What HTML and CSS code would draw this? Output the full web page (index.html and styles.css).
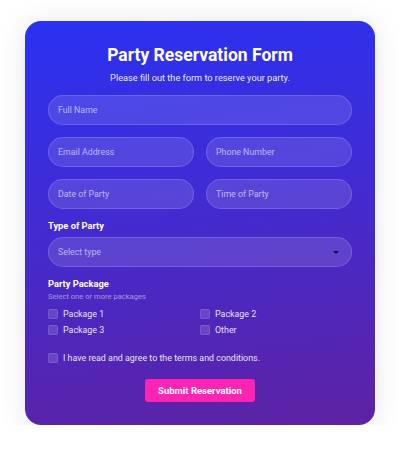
FILE: index.html
```html
<!DOCTYPE html>
<html lang="en">
<head>
<meta charset="utf-8">
<title>Party Reservation Form</title>
<link rel="stylesheet" href="styles.css">
</head>
<body>
<form class="card">
  <h1 class="title">Party Reservation Form</h1>
  <p class="subtitle">Please fill out the form to reserve your party.</p>
  <div class="fields">
    <input class="field" type="text" placeholder="Full Name">
    <div class="row">
      <input class="field" type="text" placeholder="Email Address">
      <input class="field" type="text" placeholder="Phone Number">
    </div>
    <div class="row">
      <input class="field" type="text" placeholder="Date of Party">
      <input class="field" type="text" placeholder="Time of Party">
    </div>
  </div>
  <div class="label">Type of Party</div>
  <div class="select">
    <span class="select-text">Select type</span>
    <span class="caret"></span>
  </div>
  <div class="label label-pkg">Party Package</div>
  <div class="hint">Select one or more packages</div>
  <div class="packages">
    <label class="check"><span class="box"></span>Package 1</label>
    <label class="check"><span class="box"></span>Package 2</label>
    <label class="check"><span class="box"></span>Package 3</label>
    <label class="check"><span class="box"></span>Other</label>
  </div>
  <label class="check terms"><span class="box"></span>I have read and agree to the terms and conditions.</label>
  <div class="actions">
    <button class="submit" type="button">Submit Reservation</button>
  </div>
</form>
</body>
</html>
```
FILE: styles.css
```css
* { box-sizing: border-box; }
html, body { margin: 0; padding: 0; background: #ffffff; }
body {
  font-family: Roboto, "Lato", sans-serif;
  color: #fff;
  padding-top: 21px;
}
.card {
  width: 350px;
  margin: 0 auto;
  height: 404px;
  padding: 23px 23px 23px;
  border-radius: 16px;
  background: linear-gradient(172deg, #2a31f2 0%, #3f2cd6 40%, #5e22a2 100%);
  box-shadow: 0 2px 30px rgba(0,0,0,0.11);
  display: flex;
  flex-direction: column;
}
.title {
  margin: 0;
  font-size: 17.5px;
  line-height: 22px;
  font-weight: 700;
  text-align: center;
}
.subtitle {
  margin: 5px 0 0;
  font-size: 9.2px;
  line-height: 14px;
  text-align: center;
  color: rgba(255,255,255,0.92);
}
.fields {
  margin-top: 10px;
  display: flex;
  flex-direction: column;
  gap: 12px;
}
.row {
  display: grid;
  grid-template-columns: 1fr 1fr;
  gap: 12px;
}
.field, .select {
  height: 30px;
  width: 100%;
  border-radius: 15px;
  border: 1px solid rgba(255,255,255,0.16);
  background: rgba(255,255,255,0.12);
  padding: 0 9px;
  font-family: inherit;
  font-size: 8.8px;
  color: #fff;
  outline: none;
}
.field::placeholder { color: rgba(255,255,255,0.62); }
.label {
  margin-top: 11px;
  font-size: 9.3px;
  line-height: 12px;
  font-weight: 700;
}
.select {
  margin-top: 5px;
  display: flex;
  align-items: center;
  justify-content: space-between;
  padding: 0 10px 0 9px;
}
.select-text { color: rgba(255,255,255,0.6); }
.caret {
  width: 0; height: 0;
  border-left: 3px solid transparent;
  border-right: 3px solid transparent;
  border-top: 3px solid #14123a;
  margin-right: 2px;
}
.hint {
  margin-top: 2px;
  font-size: 7.6px;
  line-height: 10px;
  color: rgba(255,255,255,0.5);
}
.packages {
  margin-top: 5px;
  display: grid;
  grid-template-columns: 1fr 1fr;
  row-gap: 2px;
}
.check {
  display: flex;
  align-items: center;
  gap: 5px;
  height: 14px;
  font-size: 8.9px;
  color: rgba(255,255,255,0.9);
}
.box {
  width: 10px;
  height: 10px;
  border-radius: 2px;
  background: rgba(255,255,255,0.14);
  border: 1px solid rgba(255,255,255,0.12);
  flex: none;
}
.terms { margin-top: 14px; }
.actions {
  margin-top: 14px;
  display: flex;
  justify-content: center;
}
.submit {
  height: 23px;
  padding: 0 13px;
  border: none;
  border-radius: 3px;
  background: #fc24b3;
  color: #fff;
  font-family: inherit;
  font-size: 9.5px;
  font-weight: 700;
}
```
